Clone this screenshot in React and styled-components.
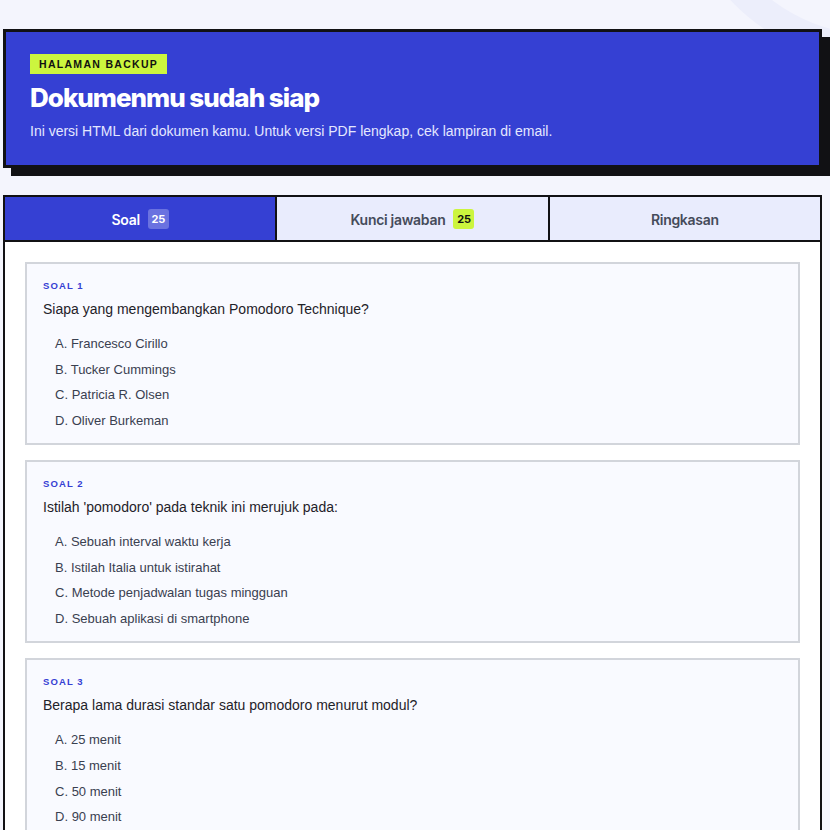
import React from 'react';
import styled, { createGlobalStyle } from 'styled-components';

const GlobalStyle = createGlobalStyle`
  html, body {
    margin: 0;
    padding: 0;
    background: #f4f5fd;
  }
  body {
    font-family: "Liberation Sans", Arial, sans-serif;
    overflow: hidden;
  }
`;

const questions = [
  {
    text: 'Siapa yang mengembangkan Pomodoro Technique?',
    options: ['Francesco Cirillo', 'Tucker Cummings', 'Patricia R. Olsen', 'Oliver Burkeman'],
  },
  {
    text: "Istilah 'pomodoro' pada teknik ini merujuk pada:",
    options: [
      'Sebuah interval waktu kerja',
      'Istilah Italia untuk istirahat',
      'Metode penjadwalan tugas mingguan',
      'Sebuah aplikasi di smartphone',
    ],
  },
  {
    text: 'Berapa lama durasi standar satu pomodoro menurut modul?',
    options: ['25 menit', '15 menit', '50 menit', '90 menit'],
  },
];

const tabs = [
  { label: 'Soal', count: 25, active: true },
  { label: 'Kunci jawaban', count: 25 },
  { label: 'Ringkasan' },
];

const Page = styled.div`
  position: relative;
  min-height: 830px;
  padding: 29px 8px 0 3px;
  box-sizing: border-box;
  overflow: hidden;
`;

// decorative ring peeking out behind the hero in the corner
const Ring = styled.div`
  position: absolute;
  left: 676px;
  top: -337px;
  width: 400px;
  height: 400px;
  border: 28px solid #eceefb;
  border-radius: 50%;
  box-sizing: border-box;
  z-index: 0;
`;

const Hero = styled.header`
  position: relative;
  z-index: 1;
  background: #3540d3;
  border: 3px solid #111114;
  box-shadow: 8px 8px 0 #111114;
  padding: 22px 24px 24px;
`;

const Tag = styled.span`
  display: inline-block;
  background: #ccf53e;
  color: #111;
  font-size: 10.5px;
  font-weight: 700;
  letter-spacing: 1.3px;
  line-height: 20px;
  padding: 0 9px;
  text-transform: uppercase;
`;

const Title = styled.h1`
  margin: 8px 0 8px;
  font-family: Inter, "Noto Sans", sans-serif;
  font-size: 26px;
  line-height: 32px;
  font-weight: 800;
  letter-spacing: -1px;
  color: #fff;
`;

const Lead = styled.p`
  margin: 0;
  font-size: 14px;
  line-height: 19px;
  color: #e4e7ff;
`;

const Panel = styled.section`
  position: relative;
  z-index: 1;
  margin-top: 27px;
  border: 2px solid #111114;
  background: #fff;
`;

// the dark grid background shows through the gaps as tab dividers
const TabBar = styled.nav`
  display: grid;
  grid-template-columns: 1fr 1fr 1fr;
  gap: 2px;
  background: #111114;
  border-bottom: 2px solid #111114;
`;

const Tab = styled.div`
  display: flex;
  align-items: center;
  justify-content: center;
  gap: 8px;
  height: 43px;
  padding-top: 1px;
  box-sizing: border-box;
  background: ${(p) => (p.$active ? '#3540d3' : '#e9ecfd')};
  color: ${(p) => (p.$active ? '#fff' : '#454b5a')};
  font-family: Inter, "Noto Sans", sans-serif;
  font-size: 14px;
  font-weight: 600;
  letter-spacing: -0.3px;
`;

const Count = styled.span`
  display: inline-flex;
  align-items: center;
  justify-content: center;
  min-width: 21px;
  height: 20px;
  border-radius: 3px;
  font-size: 11px;
  font-weight: 700;
  letter-spacing: -0.2px;
  background: ${(p) => (p.$active ? '#6a72e0' : '#ccf53e')};
  color: ${(p) => (p.$active ? '#fff' : '#111')};
`;

const List = styled.div`
  display: flex;
  flex-direction: column;
  gap: 15px;
  padding: 20px 20px 20px;
`;

const Card = styled.article`
  background: #f9faff;
  border: 2px solid #d2d5db;
  padding: 15px 16px 12px;
`;

const Label = styled.div`
  font-size: 9.5px;
  font-weight: 700;
  letter-spacing: 1.1px;
  line-height: 14px;
  color: #3540d3;
  text-transform: uppercase;
`;

const Question = styled.p`
  margin: 6px 0 15px;
  font-size: 14px;
  line-height: 20px;
  color: #1f2229;
`;

const Options = styled.ol`
  list-style: none;
  margin: 0;
  padding: 0 0 0 12px;
  display: flex;
  flex-direction: column;
  gap: 5.7px;
`;

const Option = styled.li`
  font-size: 13px;
  line-height: 20px;
  color: #394050;
`;

const letters = ['A', 'B', 'C', 'D'];

export default function App() {
  return (
    <>
      <GlobalStyle />
      <Page>
        <Ring />
        <Hero>
          <Tag>Halaman backup</Tag>
          <Title>Dokumenmu sudah siap</Title>
          <Lead>Ini versi HTML dari dokumen kamu. Untuk versi PDF lengkap, cek lampiran di email.</Lead>
        </Hero>

        <Panel>
          <TabBar>
            {tabs.map((t) => (
              <Tab key={t.label} $active={t.active}>
                {t.label}
                {t.count && <Count $active={t.active}>{t.count}</Count>}
              </Tab>
            ))}
          </TabBar>

          <List>
            {questions.map((q, i) => (
              <Card key={i}>
                <Label>Soal {i + 1}</Label>
                <Question>{q.text}</Question>
                <Options>
                  {q.options.map((o, j) => (
                    <Option key={j}>
                      {letters[j]}. {o}
                    </Option>
                  ))}
                </Options>
              </Card>
            ))}
          </List>
        </Panel>
      </Page>
    </>
  );
}
